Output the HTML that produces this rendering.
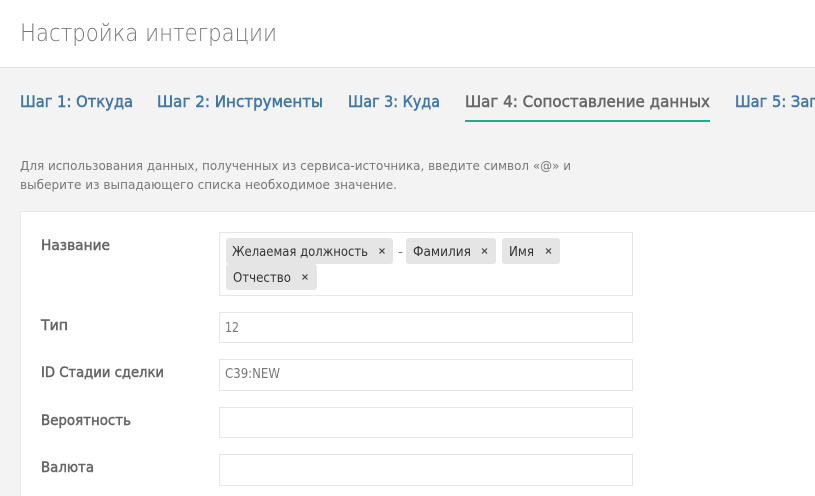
<!DOCTYPE html>
<html lang="ru">
<head>
<meta charset="utf-8">
<title>Настройка интеграции</title>
<style>
html,body{margin:0;padding:0;width:815px;height:496px;overflow:hidden;background:#f3f3f3}
.hdr{position:absolute;left:0;top:0;width:815px;height:67px;background:#fff;border-bottom:1px solid #e6e6e6}
.card{position:absolute;left:20px;top:211px;width:795px;height:285px;background:#fff;box-sizing:border-box;border:1px solid #e9e9e9;border-right:0;border-bottom:0}
.ul{position:absolute;left:465px;top:120px;width:245px;height:2px;background:#26a98b}
.in{position:absolute;left:219px;width:414px;box-sizing:border-box;background:#fff;border:1px solid #e6e6e6}
.tag{position:absolute;background:#e5e5e5;border-radius:3px;height:26px}
svg{position:absolute;left:0;top:0}
text{font-family:"DejaVu Sans","Liberation Sans",sans-serif}
.title{font-size:24px;fill:#777;font-weight:200}
.tab{font-size:16px;fill:#4076a8;stroke:#4076a8;stroke-width:.5px}
.act{fill:#666;stroke:#666}
.p{font-size:12.5px;fill:#777}
.lb{font-size:14px;fill:#666;stroke:#666;stroke-width:.5px}
.t{font-size:13.5px;fill:#333}
.v{font-size:13.5px;fill:#777}
.x{stroke:#444;stroke-width:1.2;fill:none}
</style>
</head>
<body>
<div class="hdr"></div>
<div class="ul"></div>
<div class="card"></div>
<div class="in" style="top:232px;height:64px"></div>
<div class="in" style="top:312px;height:31px"></div>
<div class="in" style="top:359px;height:32px"></div>
<div class="in" style="top:407px;height:31px"></div>
<div class="in" style="top:454px;height:32px"></div>
<div class="tag" style="left:226px;top:238px;width:167px"></div>
<div class="tag" style="left:406px;top:238px;width:90px"></div>
<div class="tag" style="left:502px;top:238px;width:58px"></div>
<div class="tag" style="left:226px;top:264px;width:91px"></div>
<svg width="815" height="496" viewBox="0 0 815 496">
<text class="title" x="20" y="41" textLength="257" lengthAdjust="spacingAndGlyphs">Настройка интеграции</text>
<text class="tab" x="20" y="107" textLength="113" lengthAdjust="spacingAndGlyphs">Шаг 1: Откуда</text>
<text class="tab" x="157" y="107" textLength="166" lengthAdjust="spacingAndGlyphs">Шаг 2: Инструменты</text>
<text class="tab" x="348" y="107" textLength="92" lengthAdjust="spacingAndGlyphs">Шаг 3: Куда</text>
<text class="tab act" x="465" y="107" textLength="245" lengthAdjust="spacingAndGlyphs">Шаг 4: Сопоставление данных</text>
<text class="tab" x="735" y="107" textLength="82" lengthAdjust="spacingAndGlyphs">Шаг 5: Заг</text>
<text class="p" x="20" y="170" textLength="551" lengthAdjust="spacingAndGlyphs">Для использования данных, полученных из сервиса-источника, введите символ «@» и</text>
<text class="p" x="20" y="189" textLength="377" lengthAdjust="spacingAndGlyphs">выберите из выпадающего списка необходимое значение.</text>
<text class="lb" x="41" y="250" textLength="69" lengthAdjust="spacingAndGlyphs">Название</text>
<text class="lb" x="41" y="330" textLength="27" lengthAdjust="spacingAndGlyphs">Тип</text>
<text class="lb" x="41" y="377" textLength="123" lengthAdjust="spacingAndGlyphs">ID Стадии сделки</text>
<text class="lb" x="41" y="425" textLength="90" lengthAdjust="spacingAndGlyphs">Вероятность</text>
<text class="lb" x="41" y="472" textLength="53" lengthAdjust="spacingAndGlyphs">Валюта</text>
<text class="t" x="232" y="256" textLength="136" lengthAdjust="spacingAndGlyphs">Желаемая должность</text>
<text class="t" x="413" y="256" textLength="58" lengthAdjust="spacingAndGlyphs">Фамилия</text>
<text class="t" x="509" y="256" textLength="25" lengthAdjust="spacingAndGlyphs">Имя</text>
<text class="t" x="233" y="282" textLength="58" lengthAdjust="spacingAndGlyphs">Отчество</text>
<text class="v" x="398" y="256">-</text>
<path class="x" d="M379.500 248.500l5 5m0-5l-5 5"/>
<path class="x" d="M482 248.500l5 5m0-5l-5 5"/>
<path class="x" d="M546 248.500l5 5m0-5l-5 5"/>
<path class="x" d="M302.500 274.500l5 5m0-5l-5 5"/>
<text class="v" x="225" y="332" textLength="14" lengthAdjust="spacingAndGlyphs">12</text>
<text class="v" x="225" y="378" textLength="55" lengthAdjust="spacingAndGlyphs">C39:NEW</text>
</svg>
</body>
</html>
